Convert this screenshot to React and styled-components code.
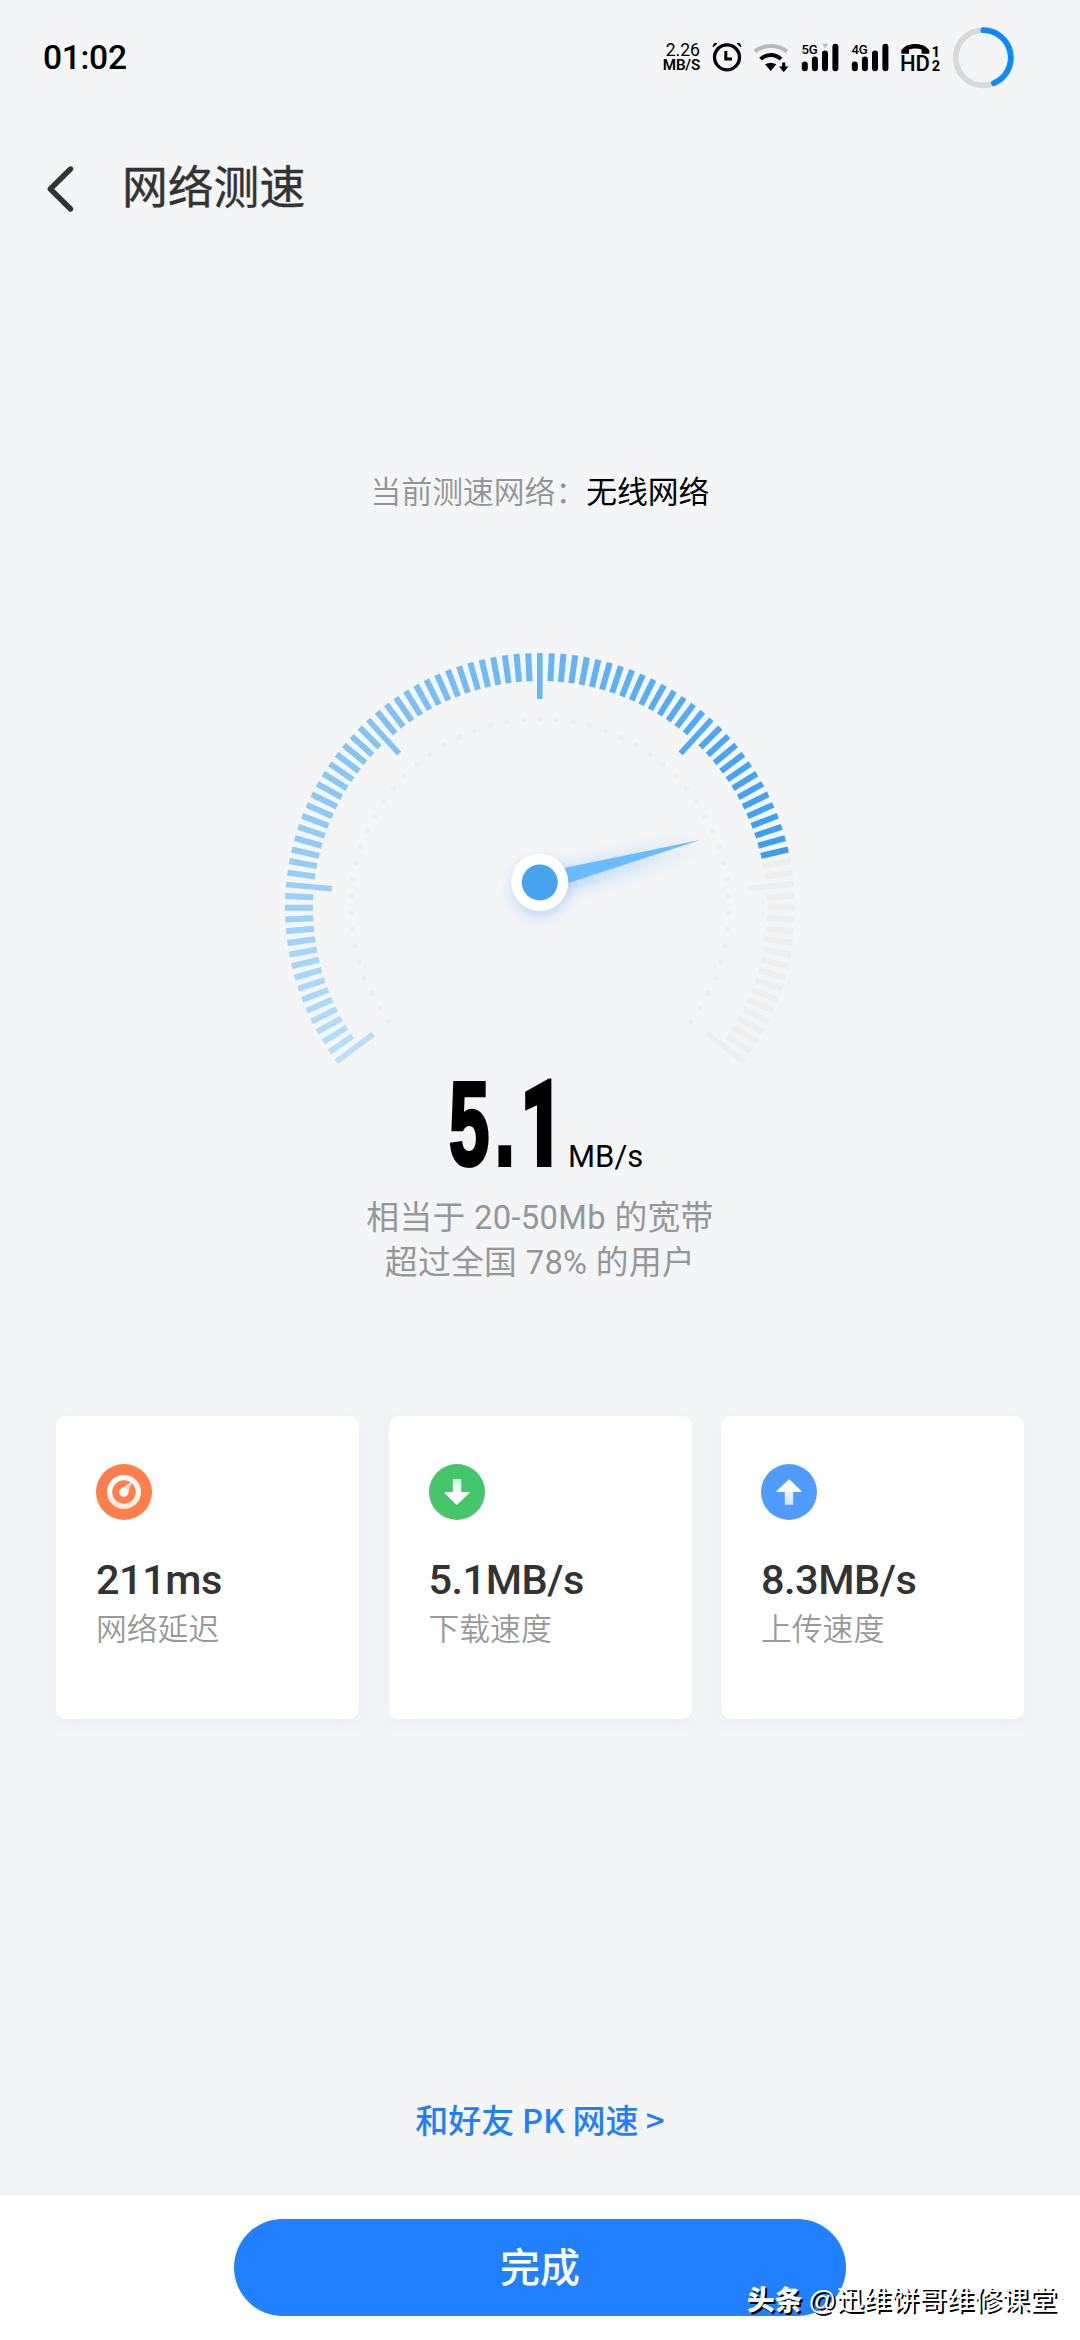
import React from "react";
import styled, { createGlobalStyle } from "styled-components";

const CENTER_X = 270;
const CENTER_Y = 258;
const SWEEP = 127;
const TICKS = 96;
const DOTS = 50;
const percent = 78;

const cards = [
  { id: "ping", value: "211ms", label: "网络延迟" },
  { id: "download", value: "5.1MB/s", label: "下载速度" },
  { id: "upload", value: "8.3MB/s", label: "上传速度" },
];

// start, left side, top and end colors of the scale
const stops = [
  [0, [183, 223, 251]],
  [14, [155, 208, 248]],
  [48, [105, 182, 244]],
  [64, [79, 169, 243]],
  [77, [57, 157, 241]],
];

const tickColor = (index) => {
  if (index >= percent) return "#eeeeee";
  const next = Math.max(
    1,
    stops.findIndex(([at]) => at >= index)
  );
  const [fromAt, from] = stops[next - 1];
  const [toAt, to] = stops[next];
  const t = (index - fromAt) / (toAt - fromAt);
  const rgb = from.map((c, i) => Math.round(c + (to[i] - c) * t));
  return `rgb(${rgb.join(",")})`;
};

const Gauge = () => {
  const ticks = [];
  for (let i = 0; i <= TICKS; i++) {
    const angle = -SWEEP + (i * SWEEP * 2) / TICKS;
    ticks.push(
      <rect
        key={i}
        x={CENTER_X - 3}
        y={CENTER_Y - 255}
        width={i % 16 === 0 ? 5.6 : 6}
        height={i % 16 === 0 ? 46 : 28}
        fill={tickColor(i)}
        transform={`rotate(${angle} ${CENTER_X} ${CENTER_Y})`}
      />
    );
  }
  const dots = [];
  for (let i = 0; i <= DOTS; i++) {
    const angle = -SWEEP + (i * SWEEP * 2) / DOTS;
    dots.push(
      <circle
        key={i}
        cx={CENTER_X}
        cy={CENTER_Y - 189}
        r="2.6"
        fill="#eeeeee"
        transform={`rotate(${angle} ${CENTER_X} ${CENTER_Y})`}
      />
    );
  }
  return (
    <GaugeSvg viewBox="0 0 540 420">
      {ticks}
      {dots}
      <g className="needle">
        <path d="M431 189.8 L267.4 223.6 L272.2 241.4 Z" fill="#6bbcff" />
      </g>
      <g className="hub">
        <circle cx="269.8" cy="232.4" r="28.5" fill="#fff" />
      </g>
      <circle cx="269.8" cy="232.4" r="18" fill="#48a3ef" />
    </GaugeSvg>
  );
};

const AlarmIcon = () => (
  <svg width="29" height="31" viewBox="0 0 29 31" fill="none" stroke="#000">
    <circle cx="15" cy="15.3" r="12.5" strokeWidth="3.3" />
    <path d="M13.8 9v8h6.2" strokeWidth="3" />
    <path
      d="M1 5 5 1.4H2.4zM29 5 25 1.4h2.6z"
      fill="#000"
      strokeWidth="1"
      strokeLinejoin="round"
    />
  </svg>
);

const WifiIcon = () => (
  <svg width="36" height="31" viewBox="0 0 36 31" fill="none">
    <path d="M1.8 9.3A27 27 0 0 1 34 9.3" stroke="#b9babc" strokeWidth="4" />
    <path d="M7.6 17.2A14.5 14.5 0 0 1 28 17.2" stroke="#000" strokeWidth="4" />
    <path d="M12 22.3Q17.7 19 23.4 22.3L17.7 29z" fill="#000" />
    <path d="M30.7 20.5V27" stroke="#000" strokeWidth="3.2" />
    <path d="M26 24.6H35.4L30.7 30.2z" fill="#000" />
  </svg>
);

const SignalIcon = ({ label, searching }) => (
  <svg width="38" height="31" viewBox="0 0 38 31">
    <text
      x="0.4"
      y="12.2"
      fontFamily="Roboto, sans-serif"
      fontSize="13.5"
      fontWeight="500"
      textLength="16.4"
      lengthAdjust="spacingAndGlyphs"
    >
      {label}
    </text>
    <g stroke="#000" strokeWidth="6" strokeLinecap="round">
      <path d="M3.8 22.4V26.2M13.9 17.4V26.2M24 11.4V26.2M34.4 4.8V26.2" />
    </g>
    {searching && <path d="M21 1.8H27.2L24.1 6.2z" fill="#b9babc" />}
  </svg>
);

const HdIcon = () => (
  <svg width="39" height="31" viewBox="0 0 39 31">
    <path
      d="M.3 11.8V8.4C3 4.2 8 2 14.2 2S25.6 4.2 28.3 8.4v3.4H20.6V7.6Q14.2 5.2 8 7.6V11.8z"
      fill="#000"
    />
    <g fontFamily="Roboto, sans-serif" fontWeight="500">
      <text x="-1" y="29" fontSize="21.5" textLength="30" lengthAdjust="spacingAndGlyphs">
        HD
      </text>
      <text x="30.6" y="15.3" fontSize="15" fontWeight="700">
        1
      </text>
      <text x="30.8" y="29" fontSize="14.5" fontWeight="700">
        2
      </text>
    </g>
  </svg>
);

const BatteryRing = () => (
  <svg width="62" height="62" viewBox="0 0 62 62" fill="none" strokeWidth="5.8">
    <circle cx="31.3" cy="30.8" r="27.6" stroke="#d7d9db" />
    <path
      d="M31.3 3.2A27.6 27.6 0 0 1 42 56.2"
      stroke="#0a8cff"
      strokeLinecap="round"
    />
  </svg>
);

const cardIcons = {
  ping: (
    <svg width="56" height="56" viewBox="0 0 56 56">
      <circle cx="28" cy="28" r="28" fill="#ff7e4b" />
      <circle cx="28" cy="28" r="14.4" fill="none" stroke="url(#dial)" strokeWidth="5.2" />
      <path d="M35.8 17.6L31.8 29.6 24.8 25z" fill="#ffe0d4" />
      <circle cx="27.8" cy="28.2" r="4.6" fill="#fff" />
      <linearGradient id="dial" x1="0" y1="0" x2="0" y2="1">
        <stop offset="0.4" stopColor="#fff" />
        <stop offset="1" stopColor="#ffe9e1" />
      </linearGradient>
    </svg>
  ),
  download: (
    <svg width="56" height="56" viewBox="0 0 56 56">
      <circle cx="28" cy="28" r="28" fill="#46c66b" />
      <path d="M23.8 15.2h8.4v13.4h-8.4z" fill="url(#down)" />
      <path
        d="M16 28.6H40L27.6 40.2z"
        fill="#fff"
        stroke="#fff"
        strokeWidth="1.2"
        strokeLinejoin="round"
      />
      <linearGradient id="down" x1="0" y1="0" x2="0" y2="1">
        <stop offset="0" stopColor="#d4fbe0" />
        <stop offset="1" stopColor="#f4fff7" />
      </linearGradient>
    </svg>
  ),
  upload: (
    <svg width="56" height="56" viewBox="0 0 56 56">
      <circle cx="28" cy="28" r="28" fill="#509bff" />
      <path d="M23.8 27.4h8.4v13.4h-8.4z" fill="url(#up)" />
      <path
        d="M16 27.4H40L28.2 16z"
        fill="#fff"
        stroke="#fff"
        strokeWidth="1.2"
        strokeLinejoin="round"
      />
      <linearGradient id="up" x1="0" y1="0" x2="0" y2="1">
        <stop offset="0" stopColor="#eef6ff" />
        <stop offset="1" stopColor="#cde6ff" />
      </linearGradient>
    </svg>
  ),
};

const App = () => {
  return (
    <Page>
      <GlobalStyle />
      <StatusBar>
        <Clock>01:02</Clock>
        <StatusIcons>
          <NetSpeed>
            <span>2.26</span>
            <b>MB/S</b>
          </NetSpeed>
          <AlarmIcon />
          <WifiIcon />
          <SignalIcon label="5G" searching />
          <SignalIcon label="4G" />
          <HdIcon />
          <BatteryRing />
        </StatusIcons>
      </StatusBar>

      <Header>
        <BackButton type="button" aria-label="返回">
          <svg width="30" height="50" viewBox="0 0 30 50" fill="none">
            <path
              d="M25.5 5 5.3 25 25.5 45"
              stroke="#333"
              strokeWidth="5.4"
              strokeLinecap="round"
              strokeLinejoin="round"
            />
          </svg>
        </BackButton>
        <h1>网络测速</h1>
      </Header>

      <Main>
        <Network>
          当前测速网络：<strong>无线网络</strong>
        </Network>
        <Gauge />
        <Result>
          <Speed>
            <span>
              5.<b>1</b>
            </span>
          </Speed>
          <Unit>MB/s</Unit>
        </Result>
        <Summary>
          <p>相当于 20-50Mb 的宽带</p>
          <p>超过全国 78% 的用户</p>
        </Summary>
        <Cards>
          {cards.map(({ id, value, label }) => (
            <Card key={id}>
              {cardIcons[id]}
              <h2>{value}</h2>
              <p>{label}</p>
            </Card>
          ))}
        </Cards>
        <PkLink href="#">和好友 PK 网速 &gt;</PkLink>
      </Main>

      <Footer>
        <DoneButton type="button">完成</DoneButton>
      </Footer>
      <Watermark>
        <b>头条</b>
        <span>@迅维饼哥维修课堂</span>
      </Watermark>
    </Page>
  );
};

const GlobalStyle = createGlobalStyle`
  * {
    box-sizing: border-box;
  }
  body {
    margin: 0;
    background: #f4f5f7;
    font-family: Roboto, "Noto Sans CJK SC", sans-serif;
  }
  h1, h2, p {
    margin: 0;
  }
  svg {
    display: block;
    flex-shrink: 0;
    overflow: visible;
  }
`;

const Page = styled.div`
  position: relative;
  display: flex;
  flex-direction: column;
  width: 1080px;
  height: 2340px;
  overflow: hidden;
  background: #f4f5f7;
`;

const StatusBar = styled.div`
  display: flex;
  align-items: center;
  justify-content: space-between;
  height: 115px;
  padding: 0 66px 0 43px;
`;

const Clock = styled.span`
  font-size: 33.6px;
  font-weight: 500;
  line-height: 40px;
  letter-spacing: -0.3px;
  color: #000;
`;

const StatusIcons = styled.div`
  display: flex;
  align-items: center;
  gap: 12px;
`;

const NetSpeed = styled.div`
  display: flex;
  flex-direction: column;
  align-items: flex-end;
  width: 36px;
  color: #000;
  white-space: nowrap;
  span {
    font-size: 17.6px;
    line-height: 15px;
  }
  b {
    font-size: 15.2px;
    font-weight: 600;
    line-height: 15px;
    letter-spacing: -0.2px;
  }
`;

const Header = styled.header`
  display: flex;
  align-items: center;
  height: 147px;
  padding-left: 45px;
  h1 {
    margin-left: 47px;
    padding-bottom: 9px;
    font-family: "Noto Sans CJK SC", sans-serif;
    font-size: 45.8px;
    font-weight: 400;
    line-height: 60px;
    color: #333;
    -webkit-text-stroke: 0.4px #333;
  }
`;

const BackButton = styled.button`
  padding: 0;
  border: none;
  background: transparent;
`;

const Main = styled.main`
  display: flex;
  flex: 1;
  flex-direction: column;
  align-items: center;
  padding-top: 205px;
`;

const Network = styled.p`
  font-family: "Noto Sans CJK SC", sans-serif;
  font-size: 30.8px;
  font-weight: 350;
  line-height: 46px;
  color: #929394;
  strong {
    font-weight: 400;
    color: #000;
  }
`;

const GaugeSvg = styled.svg`
  width: 540px;
  height: 420px;
  margin-top: 137px;
  overflow: visible;
  .needle {
    filter: drop-shadow(0 4px 9px rgba(72, 163, 239, 0.5));
  }
  .hub {
    filter: drop-shadow(0 6px 7px rgba(72, 163, 239, 0.3));
  }
`;

const Result = styled.div`
  display: flex;
  align-items: baseline;
  width: 194px;
  height: 112px;
  color: #000;
`;

// condensed numerals, the box keeps the width of the squeezed text
const Speed = styled.div`
  flex: none;
  width: 125px;
  padding-left: 6px;
  line-height: 111px;
  span {
    display: inline-block;
    font-family: "Liberation Sans", sans-serif;
    font-size: 119px;
    font-weight: 700;
    letter-spacing: 9px;
    -webkit-text-stroke: 4px #000;
    transform: translateY(-2px) scaleX(0.61);
    transform-origin: left;
  }
  b {
    font-family: Roboto, sans-serif;
    font-weight: 900;
    line-height: 0;
  }
`;

const Unit = styled.span`
  font-size: 31px;
  line-height: 40px;
`;

const Summary = styled.div`
  margin-top: 14px;
  text-align: center;
  font-size: 32.8px;
  line-height: 45px;
  letter-spacing: 0.3px;
  color: #969798;
`;

const Cards = styled.section`
  display: grid;
  grid-template-columns: repeat(3, 1fr);
  gap: 29.5px;
  width: 968px;
  margin-top: 130px;
`;

const Card = styled.article`
  height: 303px;
  padding: 48px 40px;
  border-radius: 10px;
  background: #fff;
  box-shadow: 0 6px 14px rgba(222, 226, 245, 0.3);
  h2 {
    margin-top: 36px;
    font-size: 41.5px;
    font-weight: 500;
    line-height: 48px;
    letter-spacing: -0.5px;
    color: #333;
  }
  p {
    font-family: "Noto Sans CJK SC", sans-serif;
    font-size: 30.8px;
    font-weight: 350;
    line-height: 46px;
    color: #999;
  }
`;

const PkLink = styled.a`
  margin-top: 376px;
  font-family: "Noto Sans CJK SC", sans-serif;
  font-size: 33px;
  font-weight: 500;
  line-height: 48px;
  color: #1f7fff;
  text-decoration: none;
`;

const Footer = styled.footer`
  display: flex;
  justify-content: center;
  height: 148px;
  padding-top: 24px;
  border-top: 3px solid #f1f1f2;
  background: #fff;
`;

const DoneButton = styled.button`
  width: 612px;
  height: 97px;
  padding: 0 0 5px;
  border: none;
  border-radius: 49px;
  background: #2080ff;
  font-family: "Noto Sans CJK SC", sans-serif;
  font-size: 40px;
  font-weight: 500;
  color: #fff;
`;

const Watermark = styled.div`
  position: absolute;
  right: 23px;
  bottom: 19px;
  display: flex;
  gap: 6px;
  font-family: "Liberation Sans", "Noto Sans CJK SC", sans-serif;
  font-size: 27.6px;
  line-height: 40px;
  color: #fff;
  text-shadow: 2px 2px 0 #000;
  b {
    font-weight: 900;
  }
`;

export default App;
